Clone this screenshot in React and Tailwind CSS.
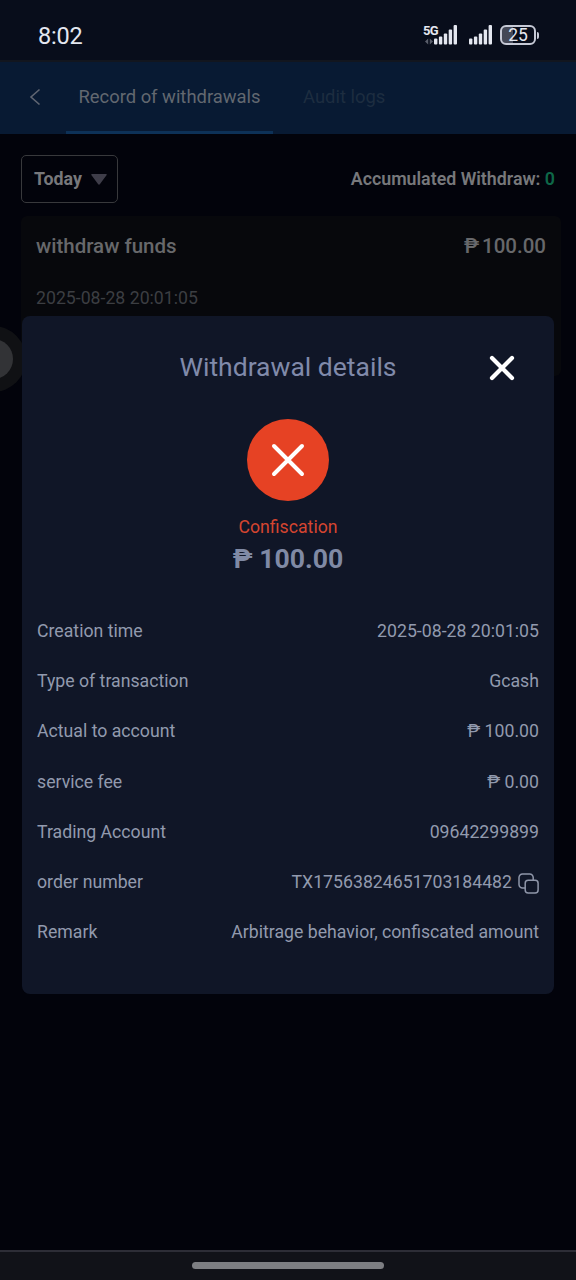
const DETAILS = [
  { label: "Creation time", value: "2025-08-28 20:01:05" },
  { label: "Type of transaction", value: "Gcash" },
  { label: "Actual to account", value: "₱ 100.00" },
  { label: "service fee", value: "₱ 0.00" },
  { label: "Trading Account", value: "09642299899" },
  { label: "order number", value: "TX17563824651703184482", copy: true },
  { label: "Remark", value: "Arbitrage behavior, confiscated amount" },
];

function SignalBars() {
  return (
    <svg width="23" height="20" viewBox="0 0 23 20" fill="#e4e7f0">
      <rect x="0" y="13.5" width="3.4" height="6" rx="1" />
      <rect x="4.9" y="11.5" width="3.4" height="8" rx="1" />
      <rect x="9.8" y="8.5" width="3.4" height="11" rx="1" />
      <rect x="14.7" y="4.5" width="3.4" height="15" rx="1" />
      <rect x="19.6" y="0" width="3.4" height="19.5" rx="1" />
    </svg>
  );
}

function StatusBar() {
  return (
    <div className="flex h-[60px] items-start justify-between bg-[#080d1b] pl-[38px] pr-[37px] text-[#e4e7f0]">
      <span className="mt-[19px] text-[23.500px] leading-[34px] tracking-[-0.2px]">8:02</span>
      <div className="mt-[25px] flex items-start">
        <div className="relative flex h-5 w-[33px] justify-end">
          <span className="absolute left-[-1px] top-[-1px] text-[13px] font-bold leading-[13px] tracking-[-0.8px]">5G</span>
          <svg className="absolute left-[1px] top-[13px]" width="8" height="7" viewBox="0 0 9 7" fill="#5a5e6b">
            <path d="M0 3.5 3.6 0v7zM9 3.5 5.4 0v7z" />
          </svg>
          <SignalBars />
        </div>
        <div className="ml-[12px]">
          <SignalBars />
        </div>
        <div className="ml-[8px] flex items-center">
          <div className="flex h-[20px] w-[36px] items-center justify-center rounded-[6px] border-2 border-[#c6c9d6] bg-linear-to-r from-[#444857] from-35% to-[#080d1b] to-35% text-[17.500px] leading-none">
            <span className="pt-px">25</span>
          </div>
          <div className="ml-px h-[7px] w-[2px] rounded-r bg-[#c6c9d6]" />
        </div>
      </div>
    </div>
  );
}

function Header() {
  return (
    <div className="flex h-[74px] border-t-2 border-[#12161f] bg-[#081a33] text-[18.400px] leading-[69px]">
      <div className="flex w-[66px] items-center pb-[3px] pl-[29px]">
        <svg width="12" height="18" viewBox="0 0 12 18" fill="none" stroke="#606672" strokeWidth="1.6">
          <path d="M10.5 1.5 2 9l8.500 7.500" />
        </svg>
      </div>
      <div className="w-[207px] border-b-[3px] border-[#0d3157] text-center text-[#626870]">Record of withdrawals</div>
      <div className="ml-[30px] text-[#1d2d40]">Audit logs</div>
    </div>
  );
}

function FilterRow() {
  return (
    <div className="flex h-[48px] items-center justify-between text-[17.800px] font-bold leading-[24px] text-[#77787b]">
      <div className="flex h-full w-[97px] items-center rounded-[5px] border border-[#38393c] pl-[12px]">
        <span>Today</span>
        <svg className="ml-[9px]" width="16" height="11" viewBox="0 0 16 11" fill="#3e3d49">
          <path d="M1 0h14q1.500 0 .5 1.300L9 10q-1 1.300-2 0L.5 1.300Q-.5 0 1 0" />
        </svg>
      </div>
      <div className="font-semibold">
        Accumulated Withdraw: <span className="text-[#0e6748]">0</span>
      </div>
    </div>
  );
}

function RecordCard() {
  return (
    <div className="mr-[-6px] mt-[13px] h-[160px] rounded-[6px] bg-[#07080c] px-[15px] pt-[15px]">
      <div className="flex justify-between text-[20.500px] font-medium leading-[30px] text-[#67686b]">
        <span>withdraw funds</span>
        <span className="flex gap-[3px]"><span>₱</span><span>100.00</span></span>
      </div>
      <div className="mt-[24px] text-[17.700px] leading-[26px] text-[#3c3e42]">2025-08-28 20:01:05</div>
    </div>
  );
}

function CopyIcon() {
  return (
    <svg className="ml-[6px] mt-[2px]" width="21" height="21" viewBox="0 0 21 21" fill="none" stroke="#8f96a9" strokeWidth="1.500">
      <path d="M7.200 15H4.500A3.500 3.500 0 0 1 1 11.500v-7A3.500 3.500 0 0 1 4.500 1h7.200A3.500 3.500 0 0 1 15.200 4.500V7" />
      <rect x="7.200" y="7.200" width="12.900" height="12.900" rx="3" />
    </svg>
  );
}

function WithdrawalDialog() {
  return (
    <div className="absolute left-[22px] top-[316px] h-[678px] w-[532px] rounded-[8px] bg-[#101627] text-[#929aae]">
      <div className="relative pt-[33px] text-center text-[26.500px] leading-[36px] text-[#808aaa]">
        Withdrawal details
        <svg className="absolute right-[39px] top-[39px]" width="26" height="26" viewBox="0 0 26 26" stroke="#ffffff" strokeWidth="4.200" strokeLinecap="round">
          <path d="m3 3 20 20M23 3 3 23" />
        </svg>
      </div>

      <div className="mt-[34px] flex flex-col items-center">
        <div className="flex size-[82px] items-center justify-center rounded-full bg-[#e64224]">
          <svg width="34" height="34" viewBox="0 0 34 34" stroke="#ffffff" strokeWidth="4" strokeLinecap="round">
            <path d="m3 3 28 28M31 3 3 31" />
          </svg>
        </div>
        <div className="mt-[13px] text-[17.700px] leading-[26px] text-[#d54530]">Confiscation</div>
        <div className="text-[26.600px] font-bold leading-[38px] text-[#808aa5]">₱ 100.00</div>
      </div>

      <div className="mt-[28px] px-[15px] text-[17.700px]">
        {DETAILS.map((item) => (
          <div key={item.label} className="flex h-[50.250px] items-center justify-between">
            <span>{item.label}</span>
            <span className="flex items-center">
              {item.value}
              {item.copy && <CopyIcon />}
            </span>
          </div>
        ))}
      </div>
    </div>
  );
}

export default function App() {
  return (
    <div className="relative flex h-[1280px] w-[576px] flex-col overflow-hidden bg-[#02030b] font-['Roboto',sans-serif]">
      <StatusBar />
      <Header />
      <div className="flex-1 px-[21px] pt-[21px]">
        <FilterRow />
        <RecordCard />
      </div>
      <div className="flex h-[30px] justify-center border-t-2 border-[#2d2d36] bg-[#111218] pt-[10px]">
        <div className="h-[7px] w-[192px] rounded-full bg-[#7d7e82]" />
      </div>

      {/* floating assist button, half off the left edge */}
      <div className="absolute left-[-40px] top-[326px] flex size-[66px] items-center justify-center rounded-full bg-[#101114]">
        <div className="size-[40px] rounded-full bg-[#323336]" />
      </div>
      <WithdrawalDialog />
    </div>
  );
}
